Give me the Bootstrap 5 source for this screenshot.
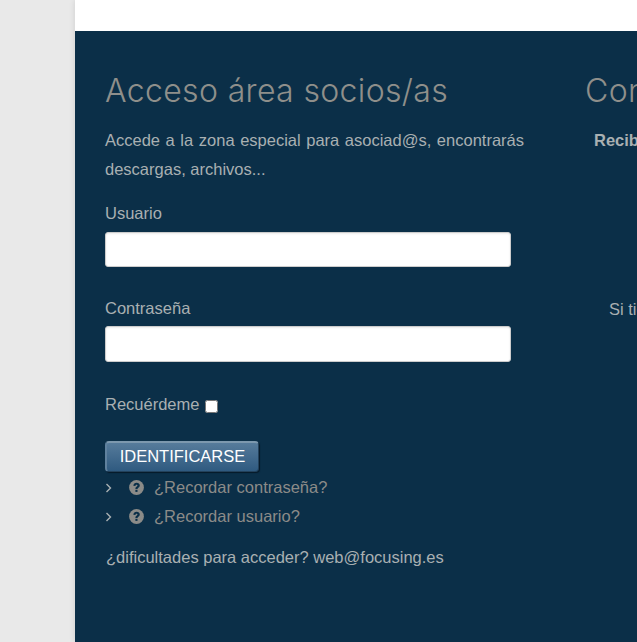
<!DOCTYPE html>
<html lang="es">
<head>
<meta charset="utf-8">
<title>Acceso</title>
<link href="https://cdn.jsdelivr.net/npm/bootstrap@5.3.0/dist/css/bootstrap.min.css" rel="stylesheet">
<style>
html,body{height:100%;}
body{background:#e9e9e9;font-family:"Liberation Sans",Arial,sans-serif;font-size:16.5px;color:#a9b0b2;overflow:hidden;}
.shell{margin-left:75px;height:642px;overflow:hidden;display:flex;flex-direction:column;box-shadow:0 0 6px rgba(0,0,0,.12);}
.topstrip{height:31px;background:#fff;flex:none;}
.panel{background:#0b2f48;flex:1;padding:38px 0 0 30px;gap:61px;min-width:0;overflow:hidden;}
.login-col{width:419px;flex:none;}
.side-col{flex:none;width:300px;white-space:nowrap;}
.head-title{font-family:"Inter","Liberation Sans",sans-serif;font-size:32px;line-height:44px;font-weight:300;color:#8f8f8b;margin:0 0 13px;letter-spacing:.35px;}
.intro{line-height:29px;text-align:justify;margin:0 0 15px;}
.field-label{display:block;line-height:29px;margin:0 0 4px;}
.field-input{display:block;width:406px;height:35px;background:#fff;border:1px solid #ccc;border-radius:3px;box-shadow:inset 0 1px 2px rgba(0,0,0,.08);padding:4px 8px;margin-bottom:27px;}
.field-input.second{height:36px;margin-bottom:28px;}
.label-tight{margin-bottom:3px;}
.remember{line-height:29px;margin:0 0 22px;}
.remember input{width:13px;height:13px;vertical-align:-3px;margin-left:1px;}
.submit-btn{display:block;width:154px;height:31px;padding:0 0 2px;color:#fff;font-size:16.5px;line-height:26px;border:1px solid #23425c;border-top:2px solid #7c98ae;border-left:2px solid #5f819e;border-radius:4px;background:linear-gradient(#567b9b,#2f5a80);box-shadow:1px 1px 1px #061a29;}
.help-list{margin:1px 0 0;padding:0;list-style:none;}
.help-list li{height:29px;line-height:29px;}
.help-list a{color:#8b8b88;text-decoration:none;}
.chev{width:7px;height:10px;margin-right:17px;flex:none;}
.qicon{width:15px;height:15px;margin-right:10px;flex:none;}
.trouble{line-height:29px;margin:12px 0 0;padding-left:1px;}
.side-title{font-family:"Inter","Liberation Sans",sans-serif;font-size:32px;line-height:44px;font-weight:300;color:#8f8f8b;margin:0 0 13px;letter-spacing:.35px;}
.side-lead{font-weight:700;line-height:29px;margin:0 0 140px;padding-left:9px;}
.side-note{line-height:29px;padding-left:24px;margin:0;}
</style>
</head>
<body>
<div class="shell">
  <div class="topstrip"></div>
  <div class="panel d-flex">
    <div class="login-col">
      <h2 class="head-title">Acceso área socios/as</h2>
      <p class="intro">Accede a la zona especial para asociad@s, encontrarás descargas, archivos...</p>
      <form>
        <label class="field-label" for="u">Usuario</label>
        <input class="field-input" id="u" type="text">
        <label class="field-label label-tight" for="p">Contraseña</label>
        <input class="field-input second" id="p" type="password">
        <p class="remember"><label for="r">Recuérdeme</label> <input id="r" type="checkbox"></p>
        <button class="submit-btn" type="button">IDENTIFICARSE</button>
      </form>
      <ul class="help-list">
        <li class="d-flex align-items-center">
          <svg class="chev" viewBox="0 0 7 10"><path d="M1.5 1l4 4-4 4" fill="none" stroke="#a9b0b2" stroke-width="1.4"/></svg>
          <svg class="qicon" viewBox="0 0 15 15"><circle cx="7.5" cy="7.5" r="7.4" fill="#8b8b88"/><path d="M4.300 5.700C4.500 3.700 5.900 2.700 7.600 2.700c1.800 0 3.200 1.100 3.200 2.700 0 2.100-2.300 2.100-2.300 3.700H6.400c0-2.500 2.100-2.500 2.100-3.500 0-.5-.4-.8-.9-.8-.7 0-1 .4-1.200 1.100z" fill="#0b2f48"/><rect x="6.400" y="9.800" width="2.100" height="2.100" fill="#0b2f48"/></svg>
          <a href="#">¿Recordar contraseña?</a>
        </li>
        <li class="d-flex align-items-center">
          <svg class="chev" viewBox="0 0 7 10"><path d="M1.5 1l4 4-4 4" fill="none" stroke="#a9b0b2" stroke-width="1.4"/></svg>
          <svg class="qicon" viewBox="0 0 15 15"><circle cx="7.5" cy="7.5" r="7.4" fill="#8b8b88"/><path d="M4.300 5.700C4.500 3.700 5.900 2.700 7.600 2.700c1.800 0 3.200 1.100 3.200 2.700 0 2.100-2.300 2.100-2.300 3.700H6.400c0-2.500 2.100-2.500 2.100-3.500 0-.5-.4-.8-.9-.8-.7 0-1 .4-1.200 1.100z" fill="#0b2f48"/><rect x="6.400" y="9.800" width="2.100" height="2.100" fill="#0b2f48"/></svg>
          <a href="#">¿Recordar usuario?</a>
        </li>
      </ul>
      <p class="trouble">¿dificultades para acceder? web@focusing.es</p>
    </div>
    <div class="side-col">
      <h2 class="side-title">Contacto</h2>
      <p class="side-lead">Recibe información</p>
      <p class="side-note">Si tienes alguna duda</p>
    </div>
  </div>
</div>
<script src="https://cdn.jsdelivr.net/npm/bootstrap@5.3.0/dist/js/bootstrap.bundle.min.js"></script>
</body>
</html>
